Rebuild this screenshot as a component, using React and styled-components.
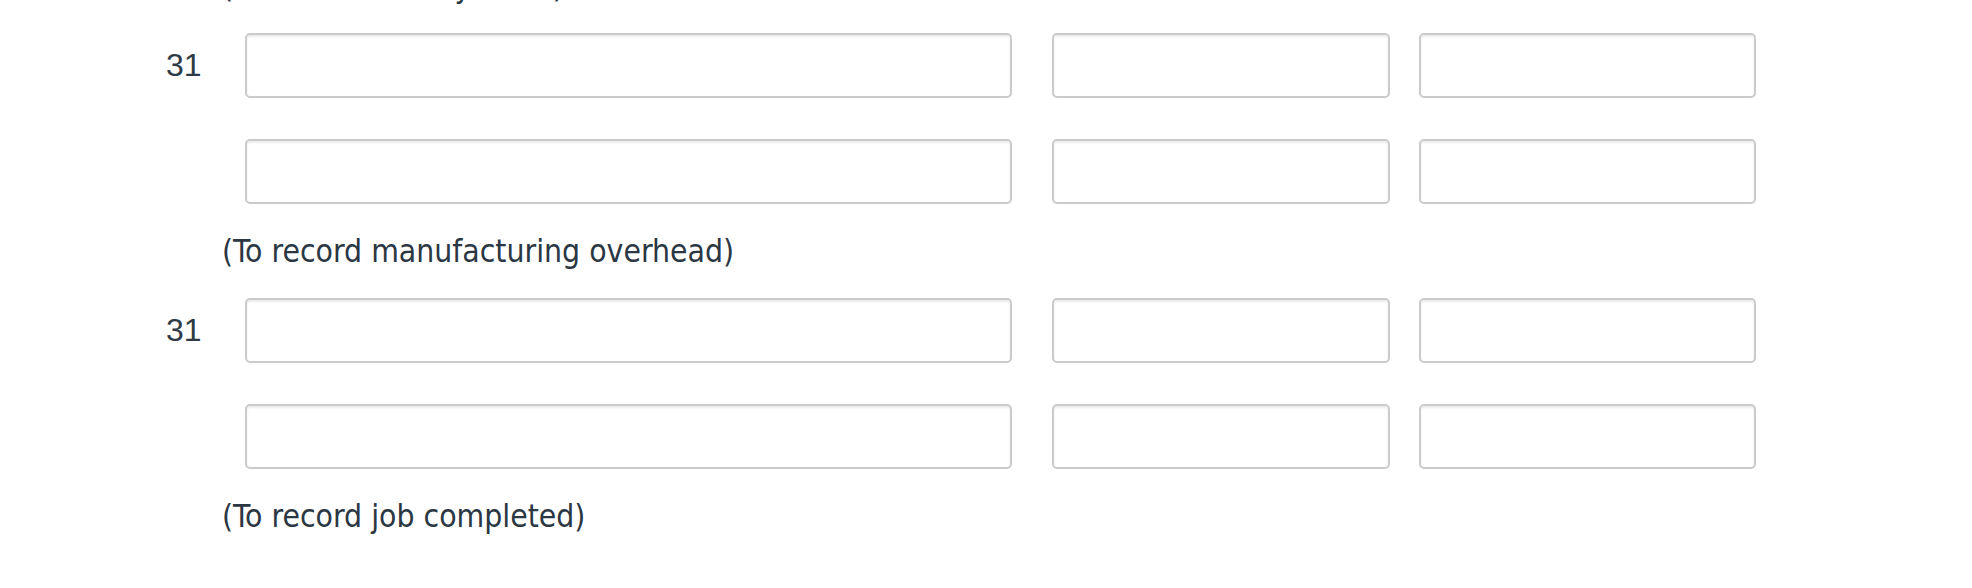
import React from "react";
import styled, { createGlobalStyle } from "styled-components";

const GlobalStyle = createGlobalStyle`
	html, body {
		margin: 0;
		padding: 0;
		background: #fff;
		overflow: hidden;
	}
`;

const Page = styled.div`
	padding-left: 150px;
	width: 1972px;
	height: 588px;
	box-sizing: border-box;
	overflow: hidden;
`;

const Row = styled.div`
	display: flex;
	align-items: center;
	height: 65px;
	margin-bottom: ${(p) => (p.$last ? "0" : "41px")};
`;

const DateCell = styled.div`
	width: 95px;
	box-sizing: border-box;
	padding-left: 16px;
	font-family: "Liberation Sans", Arial, sans-serif;
	font-size: 32px;
	color: #2e3a46;
`;

const Field = styled.input`
	width: ${(p) => p.$w}px;
	height: 65px;
	margin-left: ${(p) => p.$ml || 0}px;
	box-sizing: border-box;
	border: 2px solid #cbcbcb;
	border-radius: 5px;
	box-shadow: inset 0 2px 2px rgba(0, 0, 0, 0.075);
	background: #fff;
	padding: 0 12px;
	font-size: 28px;
	outline: none;
`;

const Note = styled.div`
	margin-left: 72px;
	height: 94px;
	box-sizing: border-box;
	padding-top: 28px;
	margin-top: ${(p) => (p.$cut ? "-61px" : "0")};
	font-family: "DejaVu Sans Condensed", "DejaVu Sans", Tahoma, sans-serif;
	font-stretch: semi-condensed;
	font-size: 31.6px;
	line-height: 38px;
	color: #2b3743;
`;

const Entry = ({ date, last }) => (
	<Row $last={last}>
		<DateCell>{date}</DateCell>
		<Field $w={767} />
		<Field $w={338} $ml={40} />
		<Field $w={337} $ml={29} />
	</Row>
);

const App = () => {
	const block = (note) => (
		<>
			<Entry date="31" />
			<Entry last />
			<Note>{note}</Note>
		</>
	);
	return (
		<Page>
			<GlobalStyle />
			<Note $cut>(To record factory labor)</Note>
			{block("(To record manufacturing overhead)")}
			{block("(To record job completed)")}
		</Page>
	);
};

export default App;
